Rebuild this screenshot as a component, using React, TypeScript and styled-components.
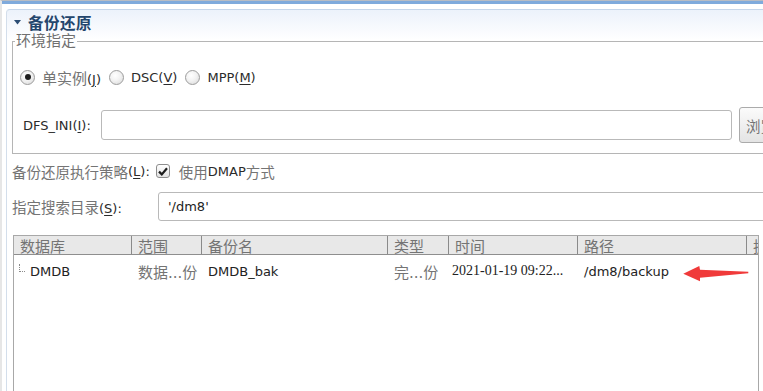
import React, { FC } from 'react';
import styled, { createGlobalStyle } from 'styled-components';

const GlobalStyle = createGlobalStyle`
  html, body {
    margin: 0;
    padding: 0;
    background: #fff;
  }
  body {
    font-family: 'DejaVu Sans', 'Noto Sans CJK SC', sans-serif;
    font-size: 13px;
    color: #2b2b2b;
  }
`;

const Page = styled.div`
  position: relative;
  width: 763px;
  height: 391px;
  overflow: hidden;
  box-sizing: border-box;
  border-top: 1px solid #b7bcc4;
  border-left: 2px solid #e6e6e6;
`;

const TopRule = styled.div`
  height: 3px;
  background: #7faadc;
`;

const Section = styled.section`
  margin: 5px 0 0 4px;
  width: 830px;
  height: 400px;
  padding-left: 5px;
  border-top: 1px solid #c6d6ea;
  border-left: 1px solid #d3deeb;
  border-top-left-radius: 4px;
  background: linear-gradient(#ecf2fb, #fff 30px);
`;

const Header = styled.div`
  display: flex;
  align-items: center;
  height: 23px;
  padding-left: 2px;
  gap: 7px;
`;

const Title = styled.span`
  font-size: 15.5px;
  font-weight: bold;
  color: #24466d;
  letter-spacing: 0.5px;
`;

const Group = styled.fieldset`
  margin: 0;
  padding: 17px 0 13px 0;
  border: 1px solid #b5b5b5;
  min-width: 0;
`;

const Legend = styled.legend`
  margin-left: 2px;
  padding: 0 1px;
  font-size: 15px;
  line-height: 17px;
  color: #707070;
`;

const Zh = styled.span<{ $size?: number }>`
  font-size: ${p => p.$size ?? 14.5}px;
  color: #747474;
`;

const Key = styled.span`
  text-decoration: underline;
  text-underline-offset: 2px;
`;

const RadioRow = styled.div`
  display: flex;
  align-items: center;
  height: 20px;
  margin-left: 7px;
`;

const RadioItem = styled.label`
  display: flex;
  align-items: center;
  gap: 7px;
  margin-right: 8px;
  white-space: nowrap;
`;

const Radio = styled.span<{ $on?: boolean }>`
  position: relative;
  width: 13px;
  height: 13px;
  border: 1px solid #9c9c9c;
  border-radius: 50%;
  background: radial-gradient(circle at 40% 35%, #ffffff 0%, #f2f2f2 45%, #d6d6d6 100%);
  &::after {
    content: '';
    display: ${p => (p.$on ? 'block' : 'none')};
    position: absolute;
    left: 3.5px;
    top: 3.5px;
    width: 6px;
    height: 6px;
    border-radius: 50%;
    background: #1e1e1e;
  }
`;

const FieldRow = styled.div<{ $indent?: number }>`
  display: flex;
  align-items: center;
  height: 30px;
  margin-left: ${p => p.$indent ?? 0}px;
`;

const Label = styled.span<{ $width: number }>`
  flex: none;
  width: ${p => p.$width}px;
  white-space: nowrap;
`;

const TextBox = styled.div<{ $width?: number; $height: number }>`
  box-sizing: border-box;
  ${p => (p.$width ? `width: ${p.$width}px; flex: none;` : 'flex: 1;')}
  height: ${p => p.$height}px;
  display: flex;
  align-items: center;
  padding-left: 9px;
  border: 1px solid #b9b9b9;
  border-radius: 3px;
  background: #fff;
  color: #222;
`;

const Browse = styled.div`
  flex: none;
  box-sizing: border-box;
  width: 64px;
  height: 36px;
  margin-left: 7px;
  padding-left: 6px;
  display: flex;
  align-items: center;
  border: 1px solid #ababab;
  border-radius: 3px;
  background: linear-gradient(#fbfbfb, #e4e4e4);
`;

const PolicyRow = styled.div`
  display: flex;
  align-items: center;
  height: 20px;
  margin-top: 7px;
  white-space: nowrap;
`;

const Check = styled.span`
  display: flex;
  align-items: center;
  justify-content: center;
  box-sizing: border-box;
  width: 14px;
  height: 14px;
  margin: 0 9px 0 6px;
  border: 1px solid #8d8d8d;
  border-radius: 3px;
  background: linear-gradient(#ffffff, #e2e2e2);
`;

const SearchRow = styled(FieldRow)`
  height: 29px;
  margin-top: 11px;
`;

const Table = styled.div`
  box-sizing: border-box;
  width: 746px;
  height: 170px;
  margin: 14px 0 0 1px;
  border: 1px solid #a8a8a8;
  overflow: hidden;
  background: #fff;
`;

const cols = '118px 70px 186px 61px 129px 169px 120px';

const HeadRow = styled.div`
  display: grid;
  grid-template-columns: ${cols};
  height: 18px;
  background: #e8e8e8;
  border-bottom: 1px solid #8e8e8e;
`;

const HeadCell = styled.div`
  display: flex;
  align-items: center;
  padding-left: 6px;
  border-right: 1px solid #8a8a8a;
  overflow: hidden;
  white-space: nowrap;
`;

const DataRow = styled.div`
  display: grid;
  grid-template-columns: ${cols};
  height: 32px;
`;

const Cell = styled.div<{ $pad?: number }>`
  display: flex;
  align-items: center;
  padding-left: ${p => p.$pad ?? 6}px;
  overflow: hidden;
  white-space: nowrap;
  color: #222;
`;

const TreeLine = styled.span`
  width: 5px;
  height: 7px;
  margin: -6px 5px 0 0;
  border-left: 1px dotted #8a8a8a;
  border-bottom: 1px dotted #8a8a8a;
`;

const TimeText = styled.span`
  font-family: 'Liberation Serif', serif;
  font-size: 14px;
  color: #222;
`;

const Arrow = styled.svg`
  position: absolute;
  left: 681px;
  top: 263px;
`;

const Triangle: FC = () => (
  <svg width="7" height="5" viewBox="0 0 7 5" style={{ marginTop: 1 }}>
    <polygon points="0,0 7,0 3.5,4.5" fill="#2c4d74" />
  </svg>
);

const App: FC = () => {
  return (
    <Page>
      <GlobalStyle />
      <TopRule />
      <Section>
        <Header>
          <Triangle />
          <Title>备份还原</Title>
        </Header>
        <Group>
          <Legend>环境指定</Legend>
          <RadioRow>
            <RadioItem>
              <Radio $on />
              <span>
                <Zh $size={15}>单实例</Zh>(<Key>J</Key>)
              </span>
            </RadioItem>
            <RadioItem>
              <Radio />
              <span>
                DSC(<Key>V</Key>)
              </span>
            </RadioItem>
            <RadioItem>
              <Radio />
              <span>
                MPP(<Key>M</Key>)
              </span>
            </RadioItem>
          </RadioRow>
          <FieldRow $indent={10} style={{ marginTop: 23 }}>
            <Label $width={78}>
              DFS_INI(<Key>I</Key>):
            </Label>
            <TextBox $width={631} $height={30} />
            <Browse>
              <Zh>浏览</Zh>
            </Browse>
          </FieldRow>
        </Group>
        <PolicyRow>
          <Zh>备份还原执行策略</Zh>(<Key>L</Key>):
          <Check>
            <svg width="10" height="9" viewBox="0 0 10 9">
              <path d="M1 4.6 L3.8 7.4 L9 1.3" fill="none" stroke="#1c1c1c" strokeWidth="2.2" />
            </svg>
          </Check>
          <Zh>使用</Zh>DMAP<Zh>方式</Zh>
        </PolicyRow>
        <SearchRow>
          <Label $width={146}>
            <Zh>指定搜索目录</Zh>(<Key>S</Key>):
          </Label>
          <TextBox $height={29}>'/dm8'</TextBox>
        </SearchRow>
        <Table>
          <HeadRow>
            {['数据库', '范围', '备份名', '类型', '时间', '路径', '执行'].map(h => (
              <HeadCell key={h}>
                <Zh $size={15}>{h}</Zh>
              </HeadCell>
            ))}
          </HeadRow>
          <DataRow>
            <Cell $pad={5}>
              <TreeLine />
              DMDB
            </Cell>
            <Cell>
              <Zh $size={15}>数据...份</Zh>
            </Cell>
            <Cell>DMDB_bak</Cell>
            <Cell>
              <Zh $size={15}>完...份</Zh>
            </Cell>
            <Cell $pad={3}>
              <TimeText>2021-01-19 09:22...</TimeText>
            </Cell>
            <Cell>/dm8/backup</Cell>
            <Cell />
          </DataRow>
        </Table>
      </Section>
      <Arrow width="67" height="18" viewBox="0 0 67 18">
        <polygon
          points="0.3,9.7 16.3,2 17,5.7 65.3,7.7 65.3,9.3 17,13.7 17,17.3"
          fill="#f03a3a"
        />
      </Arrow>
    </Page>
  );
};

export default App;
